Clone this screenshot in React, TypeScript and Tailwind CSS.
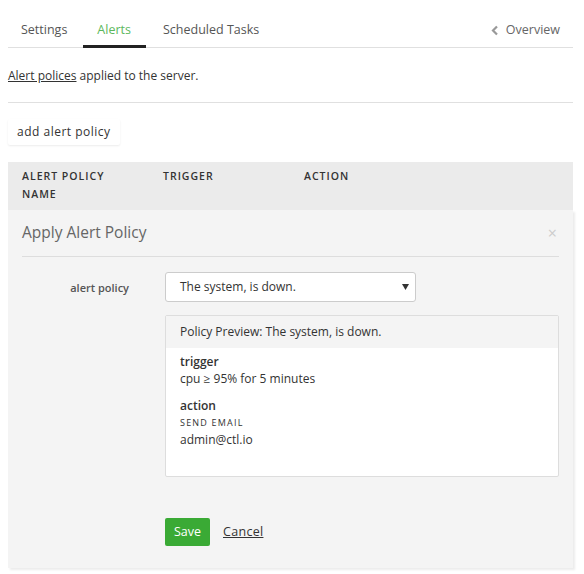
import React from "react";

export default function App() {
  const font = { fontFamily: '"Open Sans", "Noto Sans", sans-serif' };
  return (
    <div className="w-[584px] h-[574px] bg-white text-[#333] overflow-hidden" style={font}>
      <div className="pl-2 pr-[11px] pt-[14px]">
        {/* Tabs */}
        <div className="flex items-end border-b border-[#e0e0e0] h-[34px] text-[12.5px]">
          <div className="pl-[13px] pr-[16px] pb-[7px] text-[#555]">Settings</div>
          <div className="pl-[14px] pr-[15px] pb-[5px] text-[#5cb85c] border-b-[3px] border-[#222] mb-[-1px]">Alerts</div>
          <div className="pl-[17px] pb-[7px] text-[#555]">Scheduled Tasks</div>
          <div className="ml-auto pr-[13px] pb-[7px] text-[#666] flex items-center gap-[7px]">
            <svg width="8" height="11" viewBox="0 0 8 11"><path d="M6 1.5 L2 5.5 L6 9.5" stroke="#999" strokeWidth="2.2" fill="none" /></svg>
            <span>Overview</span>
          </div>
        </div>
        <div className="h-[55px] flex items-center border-b border-[#e0e0e0] text-[12px] text-[#333] pt-[1px]">
          <span><span className="underline">Alert polices</span> applied to the server.</span>
        </div>
        <div className="pt-[15px] pb-[17px]">
          <button className="h-[26px] px-[9px] text-[12px] tracking-[0.5px] text-[#333] bg-white shadow-[0_1px_2px_rgba(0,0,0,0.08)] rounded-[2px]">add alert policy</button>
        </div>
        {/* Table header */}
        <div className="bg-[#ebebeb] grid grid-cols-[141px_141px_1fr] px-[14px] pt-[5px] h-[48px] text-[10.5px] font-semibold tracking-[1px] leading-[18px] text-[#333]">
          <div>ALERT POLICY<br />NAME</div>
          <div>TRIGGER</div>
          <div>ACTION</div>
        </div>
        {/* Panel */}
        <div className="bg-[#f4f4f4] shadow-[2px_2px_2px_rgba(0,0,0,0.08)] px-[14px] pt-[11px] h-[358px]">
          <div className="flex items-center justify-between border-b border-[#ddd] pb-[12px]">
            <div className="text-[15.5px] text-[#666]">Apply Alert Policy</div>
            <div className="text-[16px] text-[#ccc] leading-none pr-[2px]">×</div>
          </div>
          <div className="flex mt-[15px]">
            <div className="w-[107px] text-right text-[11px] font-semibold text-[#555] pt-[8px]">alert policy</div>
            <div className="ml-[36px] flex-1">
              <div className="w-[251px] h-[30px] bg-white border border-[#ccc] rounded-[3px] flex items-center pl-[14px] pr-[6px] text-[12px] text-[#333]">
                <span className="flex-1">The system, is down.</span>
                <svg width="7" height="6" viewBox="0 0 7 6"><path d="M0 0 L7 0 L3.5 6 Z" fill="#333" /></svg>
              </div>
              <div className="mt-[13px] border border-[#ddd] rounded-[2px] bg-white h-[162px]">
                <div className="bg-[#f4f4f4] h-[32px] flex items-center px-[14px] text-[12px] text-[#333]">Policy Preview: The system, is down.</div>
                <div className="px-[14px] pt-[5px] text-[12px] text-[#333]">
                  <div className="font-semibold leading-[17px]">trigger</div>
                  <div className="leading-[17px]">cpu ≥ 95% for 5 minutes</div>
                  <div className="font-semibold leading-[17px] mt-[10px]">action</div>
                  <div className="text-[9px] tracking-[1.2px] leading-[17px]">SEND EMAIL</div>
                  <div className="leading-[18px]">admin@ctl.io</div>
                </div>
              </div>
              <div className="mt-[41px] flex items-center gap-[13px]">
                <button className="bg-[#3aaa35] text-white text-[12.5px] h-[28px] w-[45px] rounded-[2px]">Save</button>
                <span className="underline text-[12.5px] text-[#333] tracking-[0.3px]">Cancel</span>
              </div>
            </div>
          </div>
        </div>
      </div>
    </div>
  );
}
